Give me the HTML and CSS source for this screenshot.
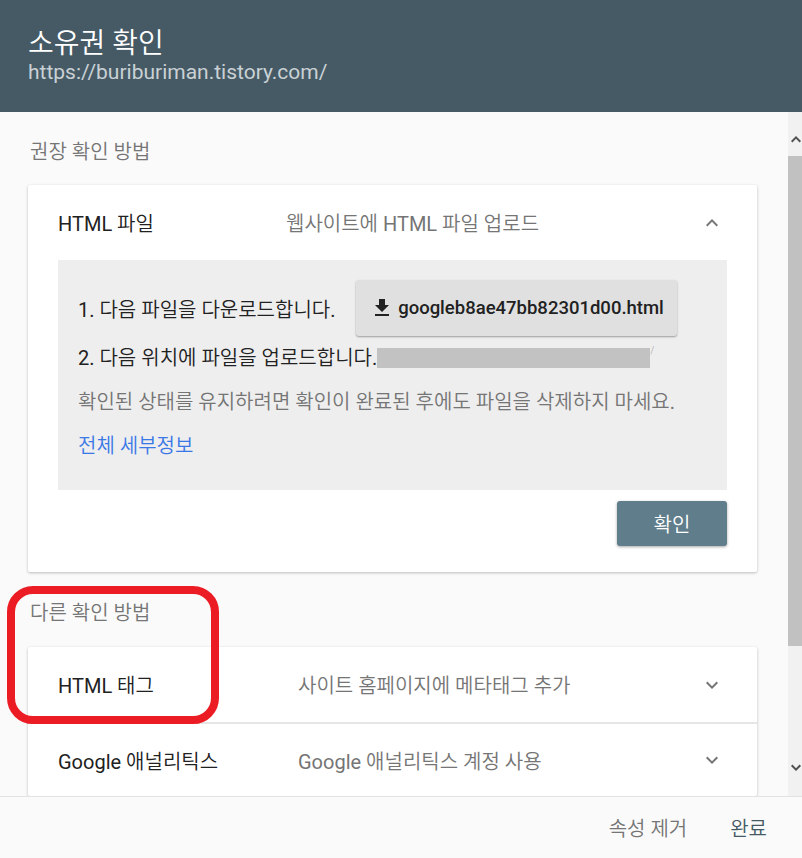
FILE: index.html
```html
<!DOCTYPE html>
<html lang="ko">
<head>
    <meta charset="UTF-8">
    <meta name="viewport" content="width=device-width, initial-scale=1.0">
    <title>소유권 확인</title>
    <link rel="stylesheet" href="styles.css">
</head>
<body>
    <div class="dialog">

        <div class="head">
            <h1>소유권 확인</h1>
            <p>https://buriburiman.tistory.com/</p>
        </div>

        <div class="middle">
            <div class="content">

                <h3 class="label">권장 확인 방법</h3>

                <div class="card">
                    <div class="row">
                        <span class="name">HTML 파일</span>
                        <span class="desc">웹사이트에 HTML 파일 업로드</span>
                        <svg class="chev" viewBox="0 0 24 24"><path d="M12 8l-6 6 1.41 1.41L12 10.83l4.59 4.58L18 14z"/></svg>
                    </div>

                    <div class="steps">
                        <div class="step1">
                            <span>1. 다음 파일을 다운로드합니다.</span>
                            <button class="dl">
                                <svg viewBox="0 0 24 24"><path d="M19 9h-4V3H9v6H5l7 7 7-7zM5 18v2h14v-2H5z"/></svg>
                                googleb8ae47bb82301d00.html
                            </button>
                        </div>
                        <div class="line">2. 다음 위치에 파일을 업로드합니다.<span class="hide"></span><span class="tail">/</span></div>
                        <div class="line note">확인된 상태를 유지하려면 확인이 완료된 후에도 파일을 삭제하지 마세요.</div>
                        <div class="line"><a href="#">전체 세부정보</a></div>
                    </div>

                    <div class="actions">
                        <button class="ok">확인</button>
                    </div>
                </div>

                <h3 class="label second">다른 확인 방법</h3>

                <div class="card other">
                    <div class="row">
                        <span class="name">HTML 태그</span>
                        <span class="desc">사이트 홈페이지에 메타태그 추가</span>
                        <svg class="chev" viewBox="0 0 24 24"><path d="M16.59 8.59L12 13.17 7.41 8.59 6 10l6 6 6-6z"/></svg>
                    </div>
                    <div class="row border">
                        <span class="name">Google 애널리틱스</span>
                        <span class="desc">Google 애널리틱스 계정 사용</span>
                        <svg class="chev" viewBox="0 0 24 24"><path d="M16.59 8.59L12 13.17 7.41 8.59 6 10l6 6 6-6z"/></svg>
                    </div>
                </div>

            </div>

            <div class="scroll">
                <svg class="arrow" viewBox="0 0 16 16"><path d="M3 11l5-5 5 5-1.4 1.4L8 8.8l-3.6 3.6z"/></svg>
                <div class="thumb"></div>
                <div class="track"></div>
                <svg class="arrow" viewBox="0 0 16 16"><path d="M3 6l5 5 5-5-1.4-1.4L8 8.2 4.4 4.6z"/></svg>
            </div>
        </div>

        <div class="foot">
            <span class="remove">속성 제거</span>
            <span class="done">완료</span>
        </div>

        <div class="mark"></div>
    </div>
</body>
</html>
```

FILE: styles.css
```css
*{
    margin: 0px;
    padding: 0px;
    box-sizing: border-box;
}

body{
    font-family: Roboto, "Noto Sans CJK KR DemiLight", "Noto Sans CJK KR", sans-serif;
    background-color: #fafafa;
}

.dialog{
    width: 802px;
    height: 858px;
    position: relative;
    overflow: hidden;
}

.head{
    height: 112px;
    background-color: #465a65;
    padding: 27px 28px 0px;
}

.head h1{
    font-size: 28px;
    font-weight: 400;
    color: white;
    line-height: 34px;
}

.head p{
    font-size: 21px;
    color: #c9d1d5;
    line-height: 26px;
    margin-top: -2px;
}

.middle{
    height: 684px;
    display: flex;
}

.content{
    width: 788px;
    padding: 28px 31px 0px 28px;
    overflow: hidden;
}

.label{
    font-size: 20px;
    font-weight: 400;
    color: #757575;
    line-height: 24px;
    padding-left: 2px;
    margin-bottom: 21px;
}

.label.second{
    margin-top: 29px;
    margin-bottom: 22px;
}

.card{
    background-color: white;
    border-radius: 2px;
    box-shadow: 0px 1px 3px rgba(0, 0, 0, 0.25);
}

.row{
    height: 74px;
    display: flex;
    align-items: center;
    padding: 0px 33px 0px 30px;
    font-size: 20px;
}

.card .row:first-child{
    height: 75px;
}

.row.border{
    border-top: 2px solid #e6e6e6;
    height: 74px;
}

.row .name{
    width: 228px;
    color: #212121;
}

.other .row .name{
    width: 240px;
}

.row .desc{
    flex: 1;
    color: #757575;
}

.chev{
    width: 24px;
    height: 24px;
    fill: #757575;
}

.steps{
    margin: 0px 30px;
    background-color: #eeeeee;
    padding: 20px 20px 22px;
    font-size: 20px;
    color: #212121;
}

.step1{
    display: flex;
    align-items: center;
    gap: 21px;
    height: 56px;
}

.dl{
    width: 321px;
    height: 56px;
    border: none;
    border-radius: 3px;
    background-color: #e0e0e0;
    box-shadow: 0px 1px 2px rgba(0, 0, 0, 0.35);
    font-family: Roboto, "Noto Sans CJK KR", sans-serif;
    font-size: 18.5px;
    font-weight: 500;
    color: #212121;
    display: flex;
    align-items: center;
    justify-content: center;
    gap: 4px;
}

.dl svg{
    width: 24px;
    height: 24px;
    fill: #212121;
}

.line{
    line-height: 44px;
    display: flex;
    align-items: center;
}

.hide{
    display: inline-block;
    width: 273px;
    height: 20px;
    background-color: #c2c2c2;
}

.tail{
    font-size: 10px;
    color: #bbbbbb;
    align-self: flex-start;
    line-height: 30px;
}

.note{
    color: #757575;
}

.line a{
    color: #3b78e7;
    text-decoration: none;
}

.actions{
    display: flex;
    justify-content: flex-end;
    padding: 11px 30px 26px;
}

.ok{
    width: 110px;
    height: 45px;
    border: none;
    border-radius: 3px;
    background-color: #607d8b;
    color: white;
    font-family: Roboto, "Noto Sans CJK KR DemiLight", "Noto Sans CJK KR", sans-serif;
    font-size: 20px;
    box-shadow: 0px 1px 3px rgba(0, 0, 0, 0.35);
}

.scroll{
    width: 14px;
    background-color: #f1f1f1;
    display: flex;
    flex-direction: column;
    align-items: flex-start;
}

.arrow{
    width: 16px;
    height: 16px;
    fill: #505050;
    margin: 18px 0px 10px 0px;
    flex-shrink: 0;
}

.arrow:last-child{
    margin: 6px 0px 20px 0px;
}

.thumb{
    width: 14px;
    height: 490px;
    background-color: #c1c1c1;
    flex-shrink: 0;
}

.track{
    flex: 1;
}

.foot{
    height: 62px;
    border-top: 1px solid #e3e3e3;
    background-color: #fafafa;
    display: flex;
    justify-content: flex-end;
    align-items: center;
    gap: 43px;
    padding-right: 35px;
    font-size: 20px;
}

.foot .remove{
    color: #757575;
}

.foot .done{
    color: #455a64;
}

.mark{
    position: absolute;
    left: 7px;
    top: 586px;
    width: 212px;
    height: 138px;
    border: 8px solid #ec1c24;
    border-radius: 26px;
}
```
